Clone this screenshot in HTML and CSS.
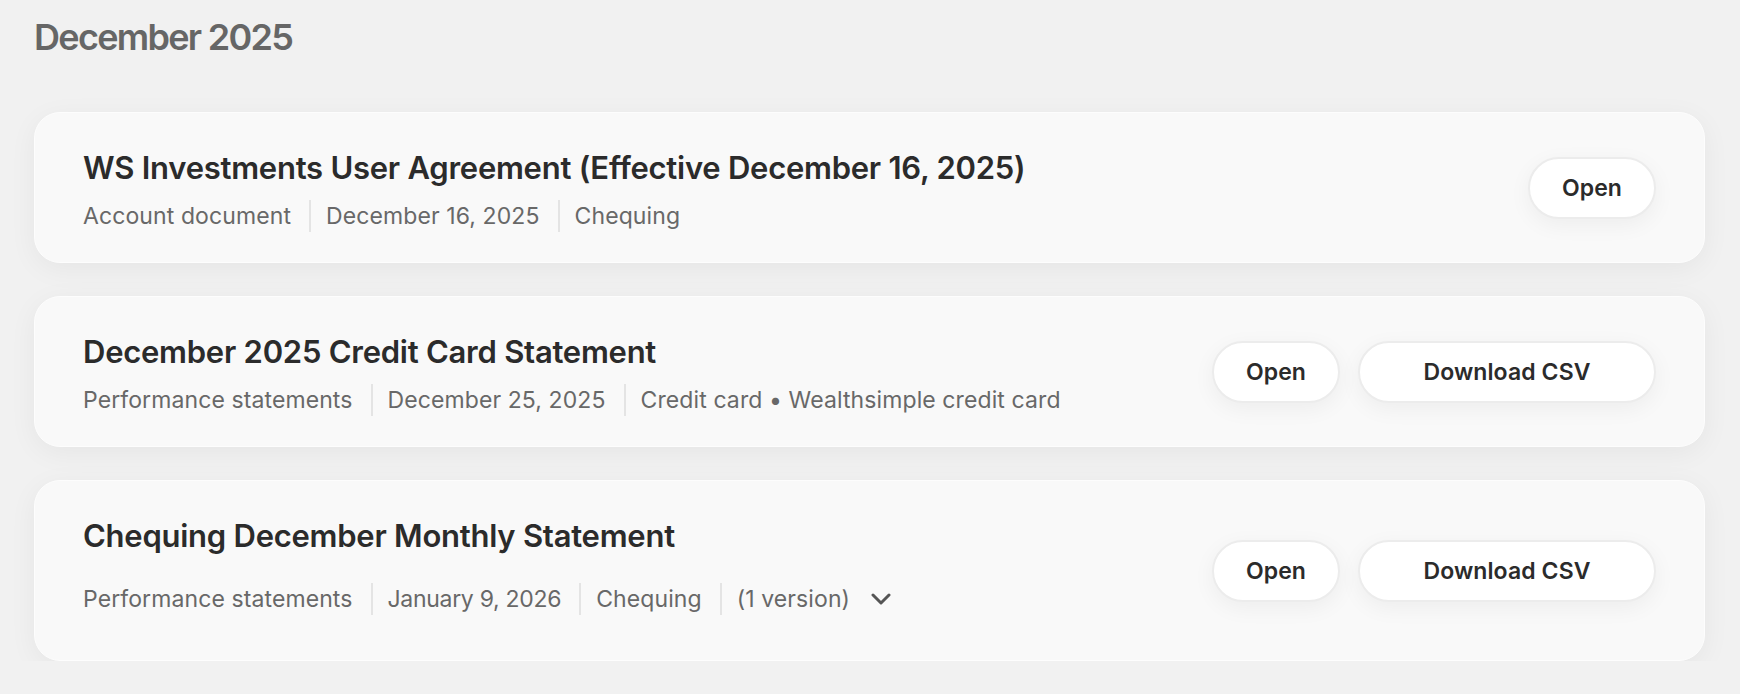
FILE: index.html
```html
<!DOCTYPE html>
<html lang="en">
<head>
  <meta charset="UTF-8" />
  <meta name="viewport" content="width=device-width, initial-scale=1.0"/>
  <title>Documents</title>
  <link rel="stylesheet" href="styles.css">
</head>
<body>

  <h2 class="month-title">December 2025</h2>

  <!-- Document list -->
  <div class="doc-list">

    <div class="doc-card">
      <div class="doc-info">
        <h3 class="doc-name">WS Investments User Agreement (Effective December 16, 2025)</h3>
        <div class="doc-meta">
          <span>Account document</span>
          <span class="sep"></span>
          <span>December 16, 2025</span>
          <span class="sep"></span>
          <span>Chequing</span>
        </div>
      </div>
      <div class="doc-actions">
        <button class="pill-btn">Open</button>
      </div>
    </div>

    <div class="doc-card">
      <div class="doc-info">
        <h3 class="doc-name">December 2025 Credit Card Statement</h3>
        <div class="doc-meta">
          <span>Performance statements</span>
          <span class="sep"></span>
          <span>December 25, 2025</span>
          <span class="sep"></span>
          <span>Credit card &bull; Wealthsimple credit card</span>
        </div>
      </div>
      <div class="doc-actions">
        <button class="pill-btn">Open</button>
        <button class="pill-btn wide">Download CSV</button>
      </div>
    </div>

    <div class="doc-card">
      <div class="doc-info">
        <h3 class="doc-name">Chequing December Monthly Statement</h3>
        <div class="doc-meta">
          <span>Performance statements</span>
          <span class="sep"></span>
          <span class="num">January 9, 2026</span>
          <span class="sep"></span>
          <span>Chequing</span>
          <span class="sep"></span>
          <span>(1 version)</span>
          <!-- Versions toggle -->
          <button class="chevron-btn" aria-label="Show versions">
            <svg width="20" height="12" viewBox="0 0 20 12">
              <path d="M2 2 L10 10 L18 2" fill="none" stroke="#555" stroke-width="3" stroke-linecap="round" stroke-linejoin="round"/>
            </svg>
          </button>
        </div>
      </div>
      <div class="doc-actions">
        <button class="pill-btn">Open</button>
        <button class="pill-btn wide">Download CSV</button>
      </div>
    </div>

  </div>

</body>
</html>
```

FILE: styles.css
```css
/* Basic Reset */
* {
  margin: 0;
  padding: 0;
  box-sizing: border-box;
}

body {
  background: #f1f1f1;
  color: #2b2b2b;
  font-family: Inter, "Noto Sans", sans-serif;
  padding: 15px 35px 0 34px;
}

/* Month heading */
.month-title {
  font-size: 36px;
  line-height: 44px;
  font-weight: 600;
  letter-spacing: -1.7px;
  color: #666;
  margin-bottom: 53px;
}

.doc-list {
  display: flex;
  flex-direction: column;
  gap: 33px;
}

/* Card */
.doc-card {
  display: flex;
  align-items: center;
  justify-content: space-between;
  background: #f9f9f9;
  border: 1px solid #fdfdfd;
  border-radius: 26px;
  padding: 30px 48px;
  box-shadow: 0 6px 28px rgba(0, 0, 0, 0.05);
}

.doc-name {
  font-size: 31px;
  line-height: 50px;
  font-weight: 600;
  letter-spacing: -0.25px;
  color: #2b2b2b;
}

.doc-meta {
  display: flex;
  align-items: center;
  gap: 18px;
  margin-top: 7px;
  min-height: 32px;
  font-size: 23px;
  line-height: 32px;
  color: #686868;
  letter-spacing: 0.1px;
}

.doc-meta .num {
  letter-spacing: -0.3px;
}

.sep {
  width: 2px;
  height: 32px;
  margin-right: -3px;
  background: #e4e4e4;
}

.chevron-btn {
  display: flex;
  align-items: center;
  justify-content: center;
  width: 44px;
  height: 62px;
  margin-left: -9px;
  background: none;
  border: none;
  cursor: pointer;
}

/* Buttons */
.doc-actions {
  display: flex;
  gap: 18px;
}

.pill-btn {
  width: 128px;
  height: 62px;
  background: #fff;
  border: 2px solid #ececec;
  border-radius: 31px;
  font-family: Inter, "Noto Sans", sans-serif;
  font-size: 23px;
  font-weight: 600;
  letter-spacing: 0.1px;
  color: #2b2b2b;
  box-shadow: 0 6px 22px rgba(0, 0, 0, 0.05);
  cursor: pointer;
}

.pill-btn.wide {
  width: 298px;
}
```
